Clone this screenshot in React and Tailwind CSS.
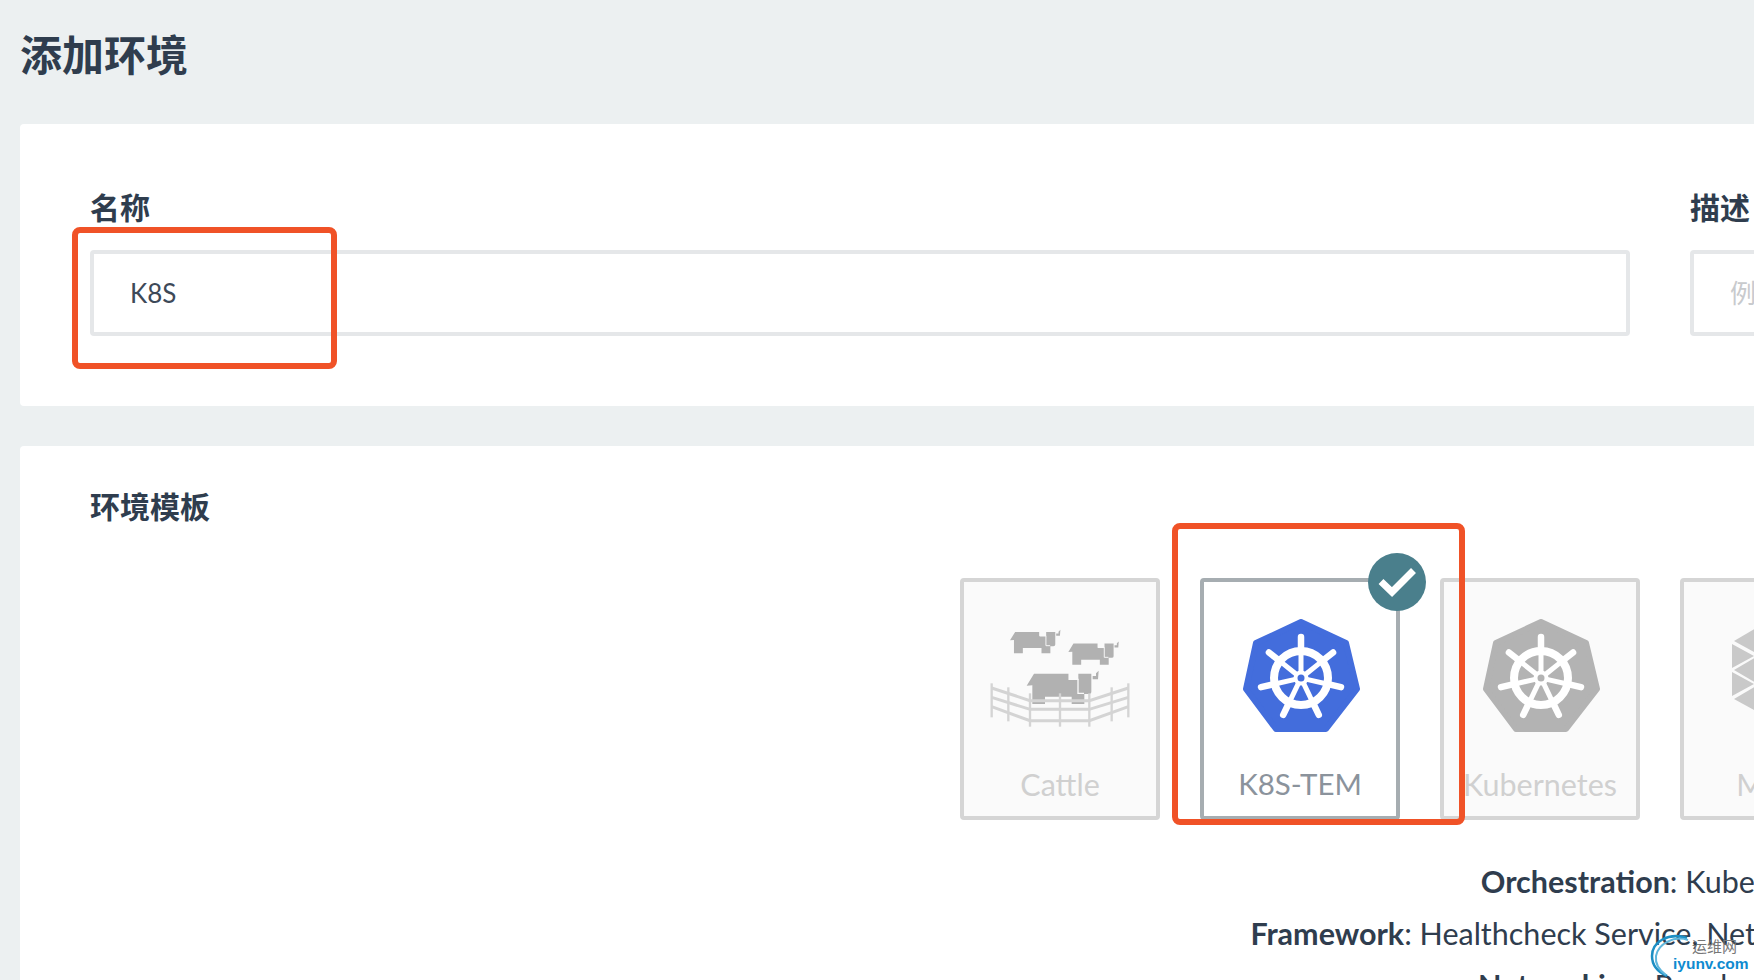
import React from 'react';

const spokes = [0, 1, 2, 3, 4, 5, 6].map((i) => (i * 2 * Math.PI) / 7);

const KubeIcon = ({ color }) => (
    <svg className="ml-[2px]" width="117" height="113" viewBox="0 0 117 113">
        <polygon
            points="58,3 103,24 114,70 83,110 33,110 3,70 13,24"
            fill={color}
            stroke={color}
            strokeWidth="6"
            strokeLinejoin="round"
        />
        <circle cx="58" cy="59" r="27" fill="none" stroke="#fff" strokeWidth="8" />
        {spokes.map((a) => (
            <g key={a} stroke="#fff" strokeLinecap="round">
                <line
                    x1={58 + 6 * Math.sin(a)}
                    y1={59 - 6 * Math.cos(a)}
                    x2={58 + 29 * Math.sin(a)}
                    y2={59 - 29 * Math.cos(a)}
                    strokeWidth="5"
                />
                <line
                    x1={58 + 30 * Math.sin(a)}
                    y1={59 - 30 * Math.cos(a)}
                    x2={58 + 41 * Math.sin(a)}
                    y2={59 - 41 * Math.cos(a)}
                    strokeWidth="6.5"
                />
            </g>
        ))}
        <circle cx="58" cy="59" r="7.5" fill="#fff" />
        <circle cx="58" cy="59" r="3.5" fill={color} />
    </svg>
);

const Cow = ({ transform }) => (
    <g transform={transform}>
        <path
            d="M170 287 L192 251 L296 251 L296 270 L325 270 L325 251 L364 251 L364 305 Q364 312 356 312 L343 312 L343 342 L305 342 L305 320 L225 320 L225 342 L187 342 L187 286 Z"
            fill="#b1b1b1"
        />
        <path d="M298 240 L298 268 L324 268 L324 310 L342 310" fill="none" stroke="#fafafa" strokeWidth="4" />
        <path d="M368 268 L384 268 L386 242 L378 250 L378 258 L368 258 Z" fill="#b1b1b1" />
    </g>
);

const CattleIcon = () => (
    <svg className="-mt-[10px]" width="180" height="160" viewBox="0 0 540 480">
        <Cow transform="translate(1 -50) scale(0.7)" />
        <Cow transform="translate(176 -15) scale(0.7)" />
        <Cow />
        <g fill="none" stroke="#d4d4d4" strokeWidth="9">
            <polyline points="65,294 180,332 358,332 475,294" />
            <polyline points="65,322 180,358 358,358 475,322" />
            <polyline points="65,350 180,392 358,392 475,350" />
        </g>
        <g stroke="#d4d4d4" strokeWidth="7">
            <line x1="65" y1="280" x2="65" y2="382" />
            <line x1="115" y1="292" x2="115" y2="394" />
            <line x1="180" y1="310" x2="180" y2="410" />
            <line x1="270" y1="310" x2="270" y2="410" />
            <line x1="358" y1="310" x2="358" y2="410" />
            <line x1="425" y1="292" x2="425" y2="394" />
            <line x1="475" y1="280" x2="475" y2="382" />
        </g>
    </svg>
);

const MesosHalf = ({ transform }) => (
    <g fill="#c9c9c9" transform={transform}>
        <polygon points="0,22 22,34 0,46" />
        <polygon points="0,50 22,62 0,74" />
        <polygon points="2,19 24,6 24,31" />
        <polygon points="2,48 24,35 24,61" />
        <polygon points="2,77 24,64 24,89" />
    </g>
);

const MesosIcon = () => (
    <svg className="-mt-[16px]" width="96" height="90" viewBox="0 0 96 90">
        <MesosHalf />
        <MesosHalf transform="translate(96 0) scale(-1 1)" />
        <polygon points="26,6 48,0 70,6 70,84 48,90 26,84" fill="#c9c9c9" />
    </svg>
);

const BlankIcon = () => <div className="h-[113px] w-[117px]"></div>;

const TemplateCard = ({ name, selected, children }) => (
    <div
        className={
            selected
                ? 'relative flex h-[242px] w-[200px] shrink-0 flex-col items-center rounded border-4 border-[#a6adb1] bg-white text-[29.5px] text-[#8b939c]'
                : 'relative flex h-[242px] w-[200px] shrink-0 flex-col items-center rounded border-4 border-[#d5d5d5] bg-[#fafafa] text-[30.5px] text-[#d0d0d0]'
        }
    >
        <div className="flex h-[186px] items-center justify-center">{children}</div>
        <div className="-mt-[2px] leading-[36px]">{name}</div>
        {selected && (
            <div className="absolute -right-[30px] -top-[29px] flex h-[58px] w-[58px] items-center justify-center rounded-full bg-[#4a7f8c]">
                <svg width="40" height="30" viewBox="0 0 40 30">
                    <path d="M4 14.5 L15 25 L36.5 3.5" fill="none" stroke="#fff" strokeWidth="7" />
                </svg>
            </div>
        )}
    </div>
);

const App = () => {
    return (
        <div className="relative h-[980px] w-[1754px] overflow-hidden bg-[#ecf0f1] font-['Lato','Noto_Sans_CJK_SC',sans-serif] text-[#2f3d4e]">
            <div className="w-[3320px] px-[20px]">
                <h1 className="flex h-[124px] items-center pb-[14px] text-[42px] font-semibold">添加环境</h1>

                <section className="rounded-sm bg-white px-[70px] pb-[70px] pt-[65px]">
                    <div className="grid grid-cols-2 gap-[60px]">
                        <div>
                            <label className="mb-[25px] block text-[30px] font-bold leading-[36px]">名称</label>
                            <div className="flex h-[86px] items-center rounded border-4 border-[#e5e7e9] px-[36px] text-[26px] text-[#3d4958]">
                                K8S
                            </div>
                        </div>
                        <div>
                            <label className="mb-[25px] block text-[30px] font-bold leading-[36px]">描述</label>
                            <div className="flex h-[86px] items-center rounded border-4 border-[#e5e7e9] px-[36px] text-[26px] text-[#c8cacd]">
                                例如：环境描述
                            </div>
                        </div>
                    </div>
                </section>

                <section className="mt-[40px] rounded-sm bg-white px-[70px] pt-[42px]">
                    <h2 className="text-[30px] font-bold leading-[36px]">环境模板</h2>
                    <div className="mt-[54px] flex justify-center gap-[40px]">
                        <TemplateCard name="Cattle"><CattleIcon /></TemplateCard>
                        <TemplateCard name="K8S-TEM" selected><KubeIcon color="#436ddc" /></TemplateCard>
                        <TemplateCard name="Kubernetes"><KubeIcon color="#b3b3b3" /></TemplateCard>
                        <TemplateCard name="Mesos"><MesosIcon /></TemplateCard>
                        <TemplateCard name="Swarm"><BlankIcon /></TemplateCard>
                        <TemplateCard name="Windows"><BlankIcon /></TemplateCard>
                    </div>
                    <div className="mt-[35px] text-center text-[30.5px] leading-[52px]">
                        <p><b>Orchestration</b>: Kubernetes</p>
                        <p><b>Framework</b>: Healthcheck Service, Network Services, Volumes</p>
                        <p><b>Networking</b>: Rancher IPsec</p>
                    </div>
                </section>
            </div>

            {/* Annotation boxes painted over the screenshot */}
            <div className="absolute left-[72px] top-[227px] h-[142px] w-[265px] rounded-lg border-[6px] border-[#f05227]"></div>
            <div className="absolute left-[1172px] top-[523px] h-[302px] w-[293px] rounded-lg border-[6px] border-[#f05227]"></div>

            {/* Watermark */}
            <div className="absolute left-[1650px] top-[932px] h-[46px] w-[104px]">
                <svg className="absolute left-0 top-0" width="40" height="46" viewBox="0 0 40 46">
                    <path d="M37 6 C18 0 2 10 2 24 C2 33 8 40 17 44" fill="none" stroke="#1d8fc4" strokeWidth="2.5" />
                    <path d="M38 8 C24 3 8 12 6 24 C5 32 9 38 16 43" fill="none" stroke="#5fb6dc" strokeWidth="2" />
                </svg>
                <span className="absolute left-[42px] top-[5px] text-[15px] leading-[18px] text-[#777]">运维网</span>
                <span className="absolute left-[23px] top-[23px] font-['Liberation_Sans',sans-serif] text-[15.5px] font-bold leading-[18px] text-[#0f8bd0]">iyunv.com</span>
            </div>
        </div>
    );
};

export default App;
